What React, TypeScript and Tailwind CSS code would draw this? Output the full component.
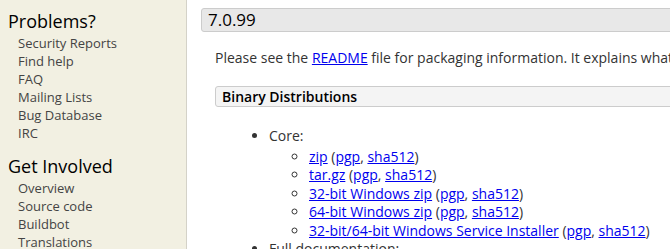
const font = { fontFamily: '"Open Sans", "Liberation Sans", sans-serif' }

const problems = ['Security Reports', 'Find help', 'FAQ', 'Mailing Lists', 'Bug Database', 'IRC']
const involved = ['Overview', 'Source code', 'Buildbot', 'Translations']

function Sig() {
  return (
    <>
      {' ('}
      <a href="#" className="text-[#0000ee] underline">pgp</a>
      {', '}
      <a href="#" className="text-[#0000ee] underline">sha512</a>
      {')'}
    </>
  )
}

const downloads = ['zip', 'tar.gz', '32-bit Windows zip', '64-bit Windows zip', '32-bit/64-bit Windows Service Installer']

export default function App() {
  return (
    <div className="flex h-[249px] w-[670px] overflow-hidden bg-white text-[#333]" style={font}>
      <aside className="w-[187px] shrink-0 border-r border-[#d4d2c8] bg-[#f2f0e2] pl-2 pt-[8px]">
        <h2 className="text-[18px] leading-[26px] text-black">Problems?</h2>
        <ul className="pl-[10px] text-[13px] leading-[18px] text-[#444]">
          {problems.map((p) => (
            <li key={p}>{p}</li>
          ))}
        </ul>
        <h2 className="mt-[11px] text-[18px] leading-[26px] text-black">Get Involved</h2>
        <ul className="pl-[10px] text-[13px] leading-[18px] text-[#444]">
          {involved.map((p) => (
            <li key={p}>{p}</li>
          ))}
        </ul>
      </aside>
      <main className="w-[560px] shrink-0 pl-[14px] pt-2 whitespace-nowrap">
        <h3 className="h-[24px] rounded-[3px] border border-[#cccccc] bg-[#e8e8e8] pl-[6px] text-[17px] leading-[22px] text-black">
          7.0.99
        </h3>
        <div className="pl-[14px]">
          <p className="mt-[16px] text-[14px] leading-[20px]">
            Please see the <a href="#" className="text-[#0000ee] underline">README</a> file for packaging information. It explains what
          </p>
          <h4 className="mt-[18px] h-[21px] rounded-[3px] border border-[#cccccc] bg-[#f4f4f4] pl-[6px] text-[14px] font-semibold leading-[19px] text-black">
            Binary Distributions
          </h4>
          <ul className="mt-[20px] list-disc pl-[54px] text-[14px] leading-[18.5px]">
            <li>
              Core:
              <ul className="mt-[2px] list-[circle] pl-[40px]">
                {downloads.map((d) => (
                  <li key={d}>
                    <a href="#" className="text-[#0000ee] underline">{d}</a>
                    <Sig />
                  </li>
                ))}
              </ul>
            </li>
            <li>Full documentation:</li>
          </ul>
        </div>
      </main>
    </div>
  )
}
